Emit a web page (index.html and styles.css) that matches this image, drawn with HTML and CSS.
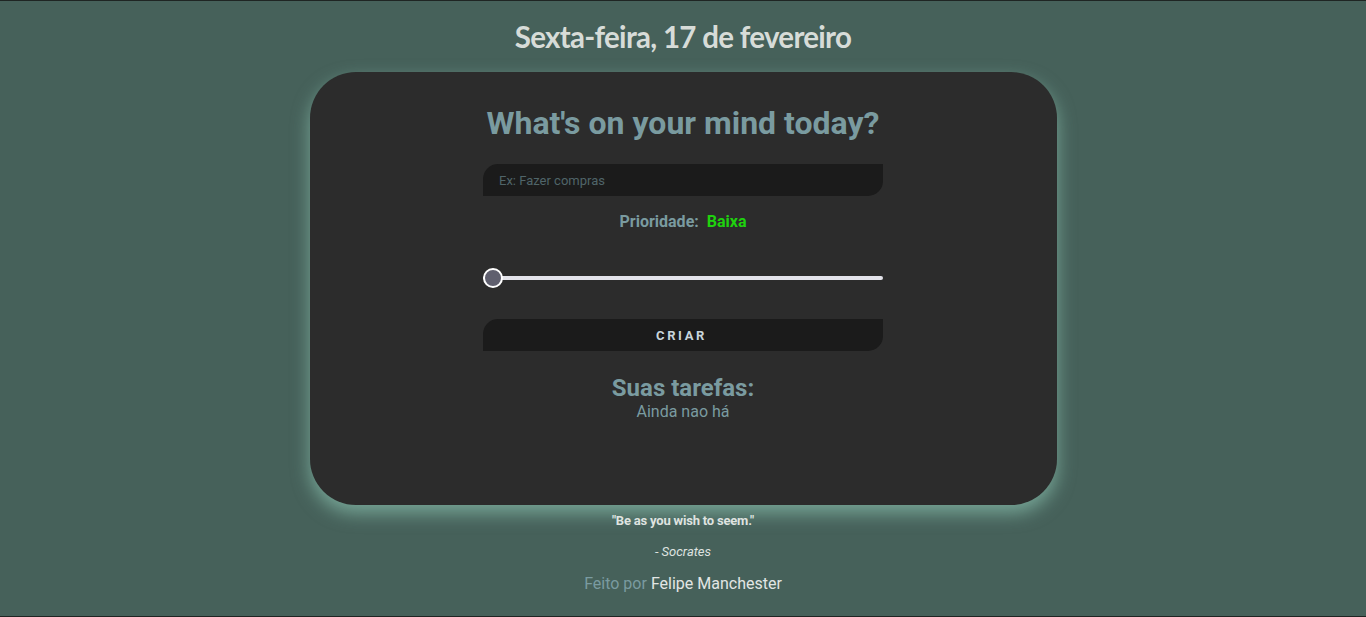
FILE: index.html
```html
<!DOCTYPE html>
<html lang="pt">
<head>
<meta charset="utf-8">
<title>Todo</title>
<link rel="stylesheet" href="styles.css">
</head>
<body>
<div class="page">
  <h1 class="date">Sexta-feira, 17 de fevereiro</h1>
  <main class="card">
    <h2 class="headline">What's on your mind today?</h2>
    <input class="task-input" type="text" placeholder="Ex: Fazer compras">
    <p class="priority">Prioridade: <span class="priority-value">Baixa</span></p>
    <input class="range" type="range" min="0" max="2" value="0">
    <button class="create-btn">CRIAR</button>
    <h3 class="tasks-title">Suas tarefas:</h3>
    <p class="tasks-empty">Ainda nao há</p>
  </main>
  <p class="quote">"Be as you wish to seem."</p>
  <p class="author">- Socrates</p>
  <p class="credits">Feito por <span class="credits-name">Felipe Manchester</span></p>
</div>
</body>
</html>
```
FILE: styles.css
```css
* { box-sizing: border-box; }
html, body { margin: 0; padding: 0; }
body {
  background: #46615a;
  font-family: Roboto, "Liberation Sans", sans-serif;
}
.page {
  height: 617px;
  border-top: 1px solid #1f2523;
  border-bottom: 1px solid #1f2523;
  display: flex;
  flex-direction: column;
  align-items: center;
  overflow: hidden;
}
.date {
  margin: 18px 0 0;
  font-family: Lato, "Open Sans", sans-serif;
  font-weight: 700;
  font-size: 29.5px;
  line-height: 36px;
  letter-spacing: -0.7px;
  color: #d7dcd8;
}
.card {
  margin-top: 17px;
  width: 747px;
  height: 433px;
  background: #2c2c2c;
  border-radius: 46px;
  box-shadow: 0 8px 18px rgba(150, 210, 190, 0.6);
  display: flex;
  flex-direction: column;
  align-items: center;
  padding-top: 31px;
}
.headline {
  margin: 0;
  font-size: 32px;
  line-height: 40px;
  font-weight: 700;
  color: #7a9ba0;
}
.task-input {
  margin-top: 21px;
  width: 400px;
  height: 32px;
  border: none;
  outline: none;
  background: #1b1b1b;
  border-radius: 15px 0 15px 0;
  padding: 0 16px;
  font-family: Roboto, sans-serif;
  font-size: 13px;
  color: #c8d4dc;
}
.task-input::placeholder { color: #506569; }
.priority {
  margin: 15px 0 0;
  font-size: 16px;
  line-height: 22px;
  font-weight: 700;
  color: #7a9ba0;
  word-spacing: 4px;
}
.priority-value { color: #1fd20e; }
.range {
  -webkit-appearance: none;
  appearance: none;
  margin: 35px 0 0;
  width: 400px;
  height: 20px;
  background: transparent;
}
.range::-webkit-slider-runnable-track {
  height: 4px;
  background: #e3e3ea;
  border-radius: 2px;
}
.range::-webkit-slider-thumb {
  -webkit-appearance: none;
  width: 20px;
  height: 20px;
  border-radius: 50%;
  background: #5f5f6e;
  border: 2px solid #ffffff;
  margin-top: -8px;
}
.create-btn {
  margin-top: 31px;
  width: 400px;
  height: 32px;
  border: none;
  background: #1b1b1b;
  border-radius: 15px 0 15px 0;
  font-family: Roboto, sans-serif;
  font-size: 13px;
  font-weight: 700;
  letter-spacing: 2.6px;
  color: #c9d5dc;
  padding-left: 3px;
}
.tasks-title {
  margin: 23px 0 0;
  font-size: 24px;
  line-height: 28px;
  font-weight: 700;
  color: #7a9ba0;
}
.tasks-empty {
  margin: 1px 0 0;
  font-size: 16px;
  line-height: 18px;
  color: #7a9ba0;
}
.quote {
  margin: 8px 0 0;
  font-size: 13px;
  line-height: 15px;
  font-weight: 700;
  color: #dfe3e0;
  letter-spacing: -0.2px;
}
.author {
  margin: 16px 0 0;
  font-size: 13px;
  line-height: 15px;
  font-style: italic;
  color: #dfe3e0;
}
.credits {
  margin: 15px 0 0;
  font-size: 16px;
  line-height: 20px;
  color: #7a9ba0;
}
.credits-name { color: #e2e6e4; }
```
